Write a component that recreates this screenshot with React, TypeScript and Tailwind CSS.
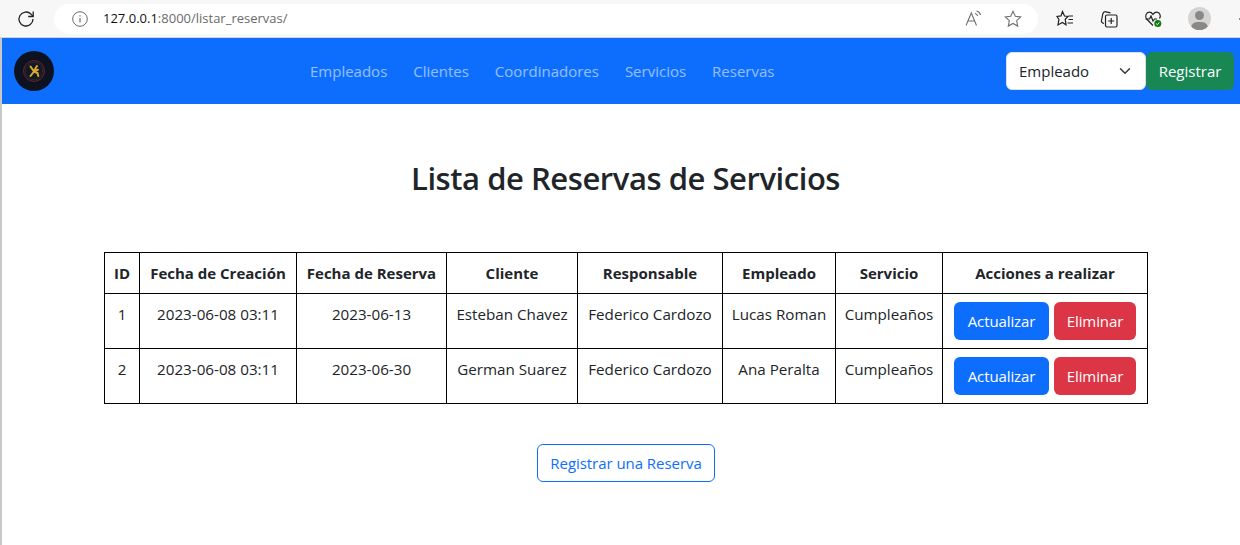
const F = "font-['Open_Sans','Noto_Sans',sans-serif]";
const rows = [
  ["1", "2023-06-08 03:11", "2023-06-13", "Esteban Chavez", "Federico Cardozo", "Lucas Roman", "Cumpleaños"],
  ["2", "2023-06-08 03:11", "2023-06-30", "German Suarez", "Federico Cardozo", "Ana Peralta", "Cumpleaños"],
];
const heads = ["ID", "Fecha de Creación", "Fecha de Reserva", "Cliente", "Responsable", "Empleado", "Servicio", "Acciones a realizar"];
const widths = [35, 157, 150, 131, 145, 113, 107, 205];

function Logo() {
  return (
    <svg width="40" height="40" viewBox="0 0 40 40" className="shrink-0">
      <circle cx="20" cy="20" r="20" fill="#0c1220" />
      <circle cx="20" cy="20" r="10.5" fill="#141821" stroke="#7c1f2c" strokeWidth="0.9" />
      <circle cx="20" cy="20" r="8.6" fill="none" stroke="#555a66" strokeWidth="0.5" strokeDasharray="1 1" />
      <path d="M16.500 15.500l3.500 5 4-1.800M20 20.500l-3.500 4.500M20 20.500l3.500 1.500.8 3M23 15l-2.500 4" fill="none" stroke="#dba92f" strokeWidth="2" strokeLinecap="round" />
    </svg>
  );
}

export default function App() {
  return (
    <div className={`${F} h-[545px] w-[1240px] overflow-hidden bg-white text-[#212529]`}>
      <div className="relative flex h-[38px] items-center border-b border-[#d4d4d4] bg-[#f7f7f7]">
        <svg width="20" height="20" viewBox="0 0 20 20" className="ml-[16px] shrink-0" fill="none" stroke="#222" strokeWidth="1.3">
          <path d="M17 10a7 7 0 1 1-2-4.900L17 7.200" />
          <path d="M17.200 2.500v5h-5" />
        </svg>
        <div className="ml-[18px] flex h-[30px] w-[984px] shrink-0 items-center rounded-full bg-white">
          <svg width="16" height="16" viewBox="0 0 16 16" className="ml-[18px] shrink-0" fill="none" stroke="#6b6b6b" strokeWidth="1">
            <circle cx="8" cy="8" r="7.300" />
            <path d="M8 7v4.500M8 4.300v1.200" strokeWidth="1.200" />
          </svg>
          <span className="ml-[15px] text-[13px] text-[#6a6a6a]">
            <span className="text-[#111]">127.0.0.1</span>:8000/listar_reservas/
          </span>
          <div className="ml-auto flex items-center gap-[22px] pr-[16px]">
            <svg width="17" height="17" viewBox="0 0 17 17" fill="none" stroke="#707070" strokeWidth="1.100">
              <path d="M1 15.500L6.300 3l5.200 12.500M3 11h6.700" />
              <path d="M10 3.500c1.300.3 2.300 1.200 2.700 2.500M11.500 1c2 .5 3.500 2 4 4" />
            </svg>
            <svg width="18" height="18" viewBox="0 0 18 18" fill="none" stroke="#707070" strokeWidth="1.100">
              <path d="M9 1.300l2.300 5 5.400.7-4 3.700 1 5.400L9 13.400l-4.700 2.700 1-5.400-4-3.700 5.400-.7z" />
            </svg>
          </div>
        </div>
        <div className="ml-[18px] flex items-center gap-[26px]">
          <svg width="18" height="18" viewBox="0 0 18 18" fill="none" stroke="#222" strokeWidth="1.200">
            <path d="M6.500 1.500l2 4.500 3.500.5-2.800 2.700.8 5.500-3.700-2.300-4.300 2.500.9-5.500L1 6.500l4-.6z" />
            <path d="M12.500 6h4.500M12.500 9.500h4.500M11.500 13h5.500" />
          </svg>
          <svg width="18" height="18" viewBox="0 0 18 18" fill="none" stroke="#222" strokeWidth="1.200">
            <path d="M4 13.500c-2-.3-2.800-1.500-2.500-3L2.800 4C3.200 2.300 4.500 1.500 6 1.800l4.500 1" />
            <rect x="5.500" y="5" width="11.500" height="12" rx="1.500" />
            <path d="M11.200 8v6M8.200 11h6" />
          </svg>
          <svg width="18" height="18" viewBox="0 0 18 18" fill="none" stroke="#222" strokeWidth="1.200">
            <path d="M9 15.500L2.600 9C.6 6.500 2.200 2.200 5.200 2.200c1.600 0 2.900.9 3.800 2.200.9-1.300 2.200-2.200 3.800-2.200 3 0 4.600 3.800 2.600 6.300" />
            <path d="M1.500 9h4l1.500-3 2 5 1.500-2h2.500" />
            <circle cx="13.800" cy="13.500" r="3.500" fill="#107c10" stroke="none" />
            <path d="M12.200 13.600l1.100 1.100 2-2.200" stroke="#fff" strokeWidth="1" />
          </svg>
        </div>
        <div className="relative ml-[26px] h-[23px] w-[23px] shrink-0 overflow-hidden rounded-full bg-[#d6d4d2]">
          <div className="absolute left-[7px] top-[4px] h-[9px] w-[9px] rounded-full bg-[#8a8886]" />
          <div className="absolute left-[3px] top-[15px] h-[12px] w-[17px] rounded-full bg-[#8a8886]" />
        </div>
        <div className="ml-auto h-[2px] w-[1px] bg-[#8a8a8a]" />
      </div>

      <div className="h-[507px] border-l-2 border-[#c8c8c8]">
        <nav className="flex h-[66px] items-center bg-[#0d6efd] pl-[12px] pr-[6px]">
          <Logo />
          <ul className="ml-[256px] flex gap-[26px] text-[15px] text-white/55">
            <li>Empleados</li>
            <li>Clientes</li>
            <li>Coordinadores</li>
            <li>Servicios</li>
            <li>Reservas</li>
          </ul>
          <div className="ml-auto flex items-center">
            <div className="flex h-[38px] w-[140px] items-center justify-between rounded-[6px] border border-[#dee2e6] bg-white pl-[12px] pr-[14px] text-[15px]">
              Empleado
              <svg width="12" height="12" viewBox="0 0 16 16" fill="none" stroke="#343a40" strokeWidth="2" strokeLinecap="round" strokeLinejoin="round">
                <path d="M2 5l6 6 6-6" />
              </svg>
            </div>
            <button className="h-[38px] w-[88px] rounded-[6px] bg-[#198754] text-[15px] text-white">Registrar</button>
          </div>
        </nav>

        <main className="flex flex-col items-center">
          <h1 className="ml-[9px] mt-[53px] text-[31px] font-semibold leading-[42px] tracking-[-0.45px]">Lista de Reservas de Servicios</h1>
          <table className="ml-[10px] mt-[53px] w-[1044px] table-fixed border-collapse border border-black text-center text-[15.2px]">
            <colgroup>
              {widths.map((w, i) => <col key={i} style={{ width: w }} />)}
            </colgroup>
            <thead>
              <tr className="h-[41px]">
                {heads.map((h) => <th key={h} className="border border-black p-0 text-[15px] font-bold">{h}</th>)}
              </tr>
            </thead>
            <tbody>
              {rows.map((r) => (
                <tr key={r[0]} className="h-[55px]">
                  {r.map((c, i) => <td key={i} className="border border-black px-0 pb-[17px] pt-[8px] align-top leading-[24px]">{c}</td>)}
                  <td className="border border-black p-0">
                    <div className="flex justify-center gap-[5px]">
                      <button className="h-[38px] w-[95px] rounded-[6px] bg-[#0d6efd] text-[15px] tracking-[-0.1px] text-white">Actualizar</button>
                      <button className="h-[38px] w-[82px] rounded-[6px] bg-[#dc3545] text-[15px] tracking-[-0.1px] text-white">Eliminar</button>
                    </div>
                  </td>
                </tr>
              ))}
            </tbody>
          </table>
          <button className="ml-[10px] mt-[40px] h-[38px] w-[178px] rounded-[6px] border border-[#0d6efd] text-[15px] tracking-[-0.05px] text-[#0d6efd]">Registrar una Reserva</button>
        </main>
      </div>
    </div>
  );
}
